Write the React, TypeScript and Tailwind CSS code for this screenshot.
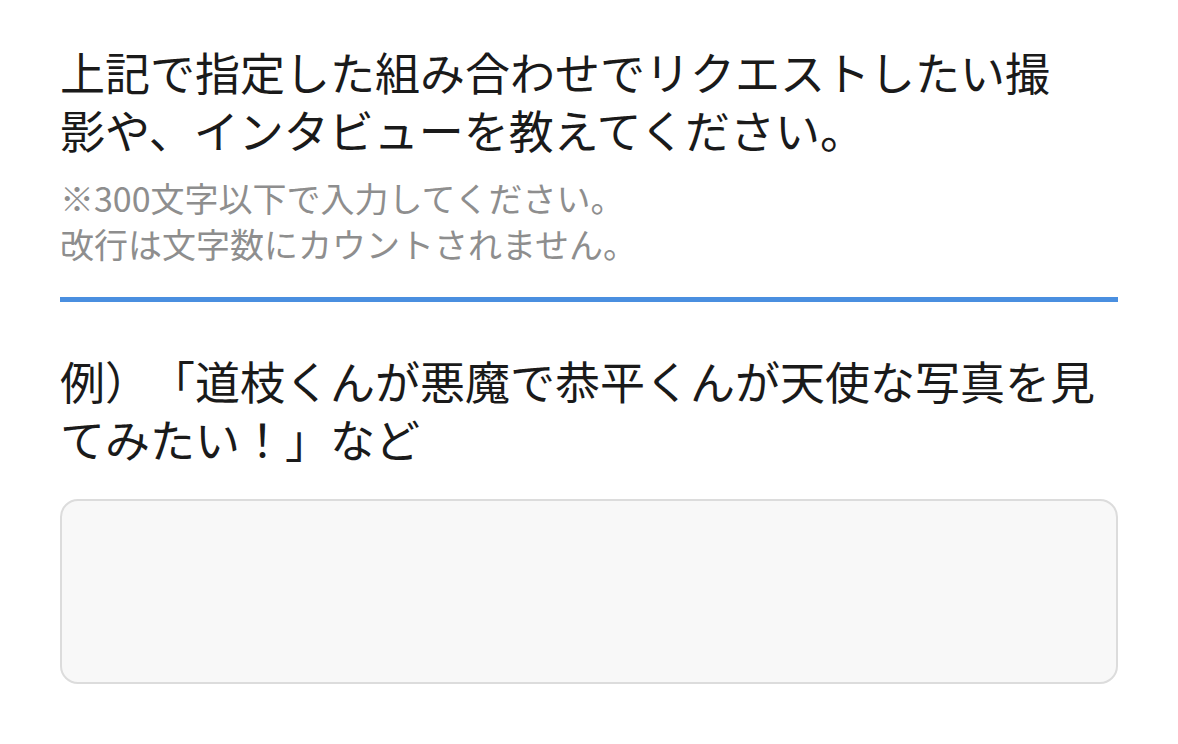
import React from 'react';

const font = { fontFamily: '"Noto Sans CJK JP", "Noto Sans", sans-serif' };

export default function App() {
  return (
    <main className="min-h-screen bg-white px-[60px] pt-[43px] [text-spacing-trim:space-all]" style={font}>
      {/* Question */}
      <h2 className="text-[45px] leading-[58px] font-normal text-[#1a1a1a]">
        上記で指定した組み合わせでリクエストしたい撮
        <br />
        影や、インタビューを教えてください。
      </h2>

      {/* Note */}
      <p className="mt-[16px] text-[34px] leading-[46px] text-[#8e8e8e]">
        ※300文字以下で入力してください。
        <br />
        改行は文字数にカウントされません。
      </p>

      <div className="mt-[30px] h-[5px] w-full bg-[#4a8fe0]" />

      {/* Example */}
      <p className="mt-[50px] text-[45px] leading-[58px] text-[#1a1a1a]">
        例）「道枝くんが悪魔で恭平くんが天使な写真を見
        <br />
        てみたい！」など
      </p>

      <textarea
        className="mt-[31px] block h-[185px] w-full resize-none rounded-[18px] border-2 border-[#dcdcdc] bg-[#f8f8f8] outline-none"
        aria-label="リクエスト"
      />
    </main>
  );
}
